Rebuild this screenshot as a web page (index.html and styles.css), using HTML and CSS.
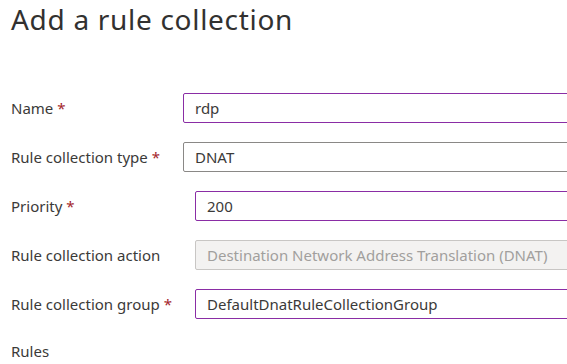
FILE: index.html
```html
<!DOCTYPE html>
<html lang="en">
<head>
    <meta charset="UTF-8">
    <title>Add a rule collection</title>
    <link rel="stylesheet" href="styles.css">
</head>
<body>
    <div class="panel">
        <h1>Add a rule collection</h1>
        <form class="form">
            <div class="row narrow">
                <label>Name <span class="req">*</span></label>
                <input type="text" class="field active" value="rdp">
            </div>
            <div class="row narrow">
                <label>Rule collection type <span class="req">*</span></label>
                <input type="text" class="field" value="DNAT">
            </div>
            <div class="row wide">
                <label>Priority <span class="req">*</span></label>
                <input type="text" class="field active" value="200">
            </div>
            <div class="row wide">
                <label>Rule collection action</label>
                <input type="text" class="field" value="Destination Network Address Translation (DNAT)" disabled>
            </div>
            <div class="row wide">
                <label>Rule collection group <span class="req">*</span></label>
                <input type="text" class="field active" value="DefaultDnatRuleCollectionGroup">
            </div>
            <div class="section">Rules</div>
        </form>
    </div>
</body>
</html>
```

FILE: styles.css
```css
html, body { margin: 0; background: #fff; overflow: hidden; }
body { font-family: 'Noto Sans', sans-serif; color: #3b3a39; }
.panel { padding-left: 11px; width: 556px; overflow: hidden; }
h1 { font-size: 28px; font-weight: 400; margin: 0; line-height: 39px; letter-spacing: 0.7px; color: #323130; }
.form { margin-top: 54px; margin-right: -20px; }
.row { display: flex; align-items: center; margin-bottom: 19px; }
.row label { font-size: 15px; flex-shrink: 0; }
.narrow label { width: 172px; }
.wide label { width: 184px; }
.req { color: #a4262c; }
.field { flex: 1; min-width: 0; height: 30px; box-sizing: border-box; padding: 0 11px; font-family: 'Noto Sans', sans-serif; font-size: 15px; color: #3b3a39; border: 1px solid #8a8886; border-radius: 2px; background: #fff; outline: none; }
.field.active { border-color: #8a2da5; }
.field:disabled { background: #f3f2f1; color: #a19f9d; border-color: #c8c6c4; }
.section { font-size: 15px; margin-top: 22px; }
```
